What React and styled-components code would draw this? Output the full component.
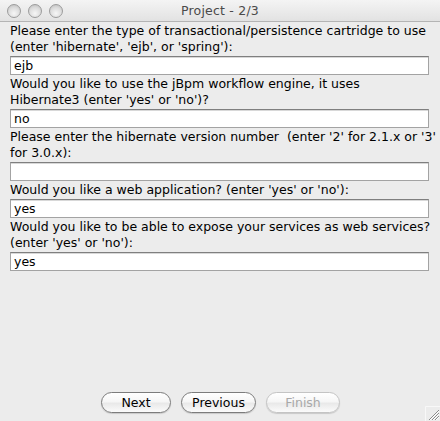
import React from 'react'
import styled, { createGlobalStyle } from 'styled-components'

const Global = createGlobalStyle`
  html, body {
    margin: 0;
    padding: 0;
    background: #ececec;
  }
  body {
    font-family: "DejaVu Sans", "Liberation Sans", sans-serif;
  }
`

const Window = styled.div`
  position: relative;
  display: flex;
  flex-direction: column;
  width: 440px;
  height: 421px;
  background: #ececec;
  overflow: hidden;
`

const TitleBar = styled.div`
  position: relative;
  display: flex;
  align-items: center;
  justify-content: center;
  height: 21px;
  border-bottom: 1px solid #b4b4b4;
  background: linear-gradient(#f4f4f4, #e2e2e2);
`

const Lights = styled.div`
  position: absolute;
  left: 7px;
  top: 4px;
  display: flex;
  gap: 7px;
`

const Light = styled.span`
  width: 12px;
  height: 12px;
  border-radius: 50%;
  border: 1px solid #9c9c9c;
  background: radial-gradient(circle at 50% 70%, #f6f6f6 0%, #dcdcdc 55%, #b8b8b8 100%);
`

const Title = styled.div`
  font-size: 12.5px;
  color: #4a4a4a;
  letter-spacing: 0.2px;
`

const Content = styled.div`
  flex: 1;
  display: flex;
  flex-direction: column;
  padding: 1px 11px 0 10px;
`

const Label = styled.div`
  font-size: 12.5px;
  line-height: 16px;
  color: #000;
  white-space: pre;
`

const Field = styled.div`
  box-sizing: border-box;
  height: 19px;
  margin: 1px 0;
  padding: 0 3px;
  display: flex;
  align-items: center;
  background: #fff;
  border: 1px solid #a3a3a3;
  border-top-color: #7f7f7f;
  box-shadow: inset 0 1px 0 #d8d8d8;
  font-size: 12.5px;
  color: #000;
`

const Footer = styled.div`
  display: flex;
  justify-content: center;
  gap: 10px;
  padding: 0 0 8px 1px;
`

const Button = styled.div`
  box-sizing: border-box;
  width: ${p => p.$w}px;
  height: 21px;
  border-radius: 11px;
  border: 1px solid ${p => (p.$disabled ? '#c4c4c4' : '#7c7c7c')};
  background: linear-gradient(#ffffff, #f6f6f6 45%, #e9e9e9 55%, #fbfbfb);
  box-shadow: 0 1px 1px rgba(0, 0, 0, 0.15);
  display: flex;
  align-items: center;
  justify-content: center;
  font-size: 12.5px;
  color: ${p => (p.$disabled ? '#a8a8a8' : '#000')};
`

const Grip = styled.svg`
  position: absolute;
  right: 0;
  bottom: 0;
`

const questions = [
  {
    lines: ['Please enter the type of transactional/persistence cartridge to use', "(enter 'hibernate', 'ejb', or 'spring'):"],
    value: 'ejb'
  },
  {
    lines: ['Would you like to use the jBpm workflow engine, it uses', "Hibernate3 (enter 'yes' or 'no')?"],
    value: 'no'
  },
  {
    lines: ["Please enter the hibernate version number  (enter '2' for 2.1.x or '3'", 'for 3.0.x):'],
    value: ''
  },
  {
    lines: ["Would you like a web application? (enter 'yes' or 'no'):"],
    value: 'yes'
  },
  {
    lines: ['Would you like to be able to expose your services as web services?', "(enter 'yes' or 'no'):"],
    value: 'yes'
  }
]

function App () {
  return (
    <Window>
      <Global />
      <TitleBar>
        <Lights>
          <Light />
          <Light />
          <Light />
        </Lights>
        <Title>Project - 2/3</Title>
      </TitleBar>
      <Content>
        {questions.map((q, i) => (
          <React.Fragment key={i}>
            {q.lines.map((l, j) => (
              <Label key={j}>{l}</Label>
            ))}
            <Field>{q.value}</Field>
          </React.Fragment>
        ))}
      </Content>
      <Footer>
        <Button $w={70}>Next</Button>
        <Button $w={75}>Previous</Button>
        <Button $w={74} $disabled>Finish</Button>
      </Footer>
      <Grip width='15' height='15' viewBox='0 0 15 15'>
        <path d='M0.5 15 V0.5 H15' fill='none' stroke='#f8f8f8' />
        <path d='M4 14 L14 4 M7 14 L14 7 M10 14 L14 10' stroke='#8a8a8a' strokeWidth='1' />
        <path d='M5 14 L14 5 M8 14 L14 8 M11 14 L14 11' stroke='#fff' strokeWidth='1' />
      </Grip>
    </Window>
  )
}

export default App
